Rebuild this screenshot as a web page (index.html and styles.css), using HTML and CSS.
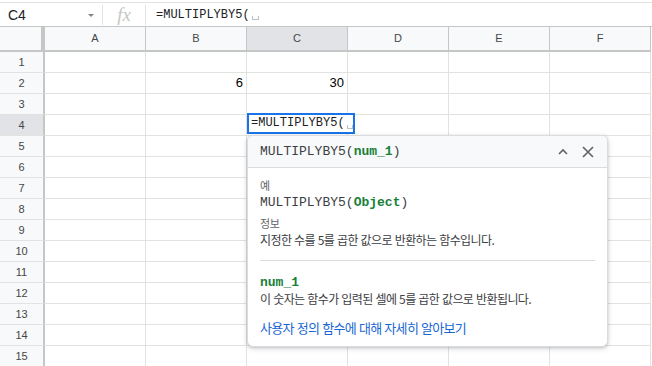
FILE: index.html
```html
<!DOCTYPE html>
<html lang="ko">
<head>
<meta charset="utf-8">
<link rel="stylesheet" href="styles.css">
</head>
<body>
<div class="app">
  <div class="formula-bar">
    <div class="name-box"><span class="name">C4</span><span class="caret"></span></div>
    <div class="sep"></div>
    <div class="fx">fx</div>
    <div class="sep"></div>
    <div class="formula">=MULTIPLYBY5(<span class="ph"></span></div>
  </div>
  <div class="grid">
    <div class="corner"></div>
    <div class="ch">A</div><div class="ch">B</div><div class="ch sel">C</div><div class="ch">D</div><div class="ch">E</div><div class="ch">F</div>

    <div class="rh">1</div><div class="c"></div><div class="c"></div><div class="c"></div><div class="c"></div><div class="c"></div><div class="c"></div>
    <div class="rh">2</div><div class="c"></div><div class="c num">6</div><div class="c num">30</div><div class="c"></div><div class="c"></div><div class="c"></div>
    <div class="rh">3</div><div class="c"></div><div class="c"></div><div class="c"></div><div class="c"></div><div class="c"></div><div class="c"></div>
    <div class="rh sel">4</div><div class="c"></div><div class="c"></div><div class="c"></div><div class="c"></div><div class="c"></div><div class="c"></div>
    <div class="rh">5</div><div class="c"></div><div class="c"></div><div class="c"></div><div class="c"></div><div class="c"></div><div class="c"></div>
    <div class="rh">6</div><div class="c"></div><div class="c"></div><div class="c"></div><div class="c"></div><div class="c"></div><div class="c"></div>
    <div class="rh">7</div><div class="c"></div><div class="c"></div><div class="c"></div><div class="c"></div><div class="c"></div><div class="c"></div>
    <div class="rh">8</div><div class="c"></div><div class="c"></div><div class="c"></div><div class="c"></div><div class="c"></div><div class="c"></div>
    <div class="rh">9</div><div class="c"></div><div class="c"></div><div class="c"></div><div class="c"></div><div class="c"></div><div class="c"></div>
    <div class="rh">10</div><div class="c"></div><div class="c"></div><div class="c"></div><div class="c"></div><div class="c"></div><div class="c"></div>
    <div class="rh">11</div><div class="c"></div><div class="c"></div><div class="c"></div><div class="c"></div><div class="c"></div><div class="c"></div>
    <div class="rh">12</div><div class="c"></div><div class="c"></div><div class="c"></div><div class="c"></div><div class="c"></div><div class="c"></div>
    <div class="rh">13</div><div class="c"></div><div class="c"></div><div class="c"></div><div class="c"></div><div class="c"></div><div class="c"></div>
    <div class="rh">14</div><div class="c"></div><div class="c"></div><div class="c"></div><div class="c"></div><div class="c"></div><div class="c"></div>
    <div class="rh">15</div><div class="c"></div><div class="c"></div><div class="c"></div><div class="c"></div><div class="c"></div><div class="c"></div>
  </div>

  <div class="editor">=MULTIPLYBY5(<span class="ph"></span></div>

  <div class="popup">
    <div class="pop-head">
      <div class="sig">MULTIPLYBY5(<b class="arg">num_1</b>)</div>
      <svg class="ico chev" width="12" height="12" viewBox="0 0 12 12"><path d="M2 8 L6 4 L10 8" fill="none" stroke="#5f6368" stroke-width="1.6"/></svg>
      <svg class="ico close" width="14" height="14" viewBox="0 0 14 14"><path d="M2 2 L12 12 M12 2 L2 12" fill="none" stroke="#5f6368" stroke-width="1.6"/></svg>
    </div>
    <div class="pop-body">
      <div class="label">예</div>
      <div class="sig ex">MULTIPLYBY5(<b class="arg">Object</b>)</div>
      <div class="label info">정보</div>
      <div class="desc">지정한 수를 5를 곱한 값으로 반환하는 함수입니다.</div>
      <div class="divider"></div>
      <div class="argname">num_1</div>
      <div class="desc argdesc">이 숫자는 함수가 입력된 셀에 5를 곱한 값으로 반환됩니다.</div>
      <a class="link" href="#">사용자 정의 함수에 대해 자세히 알아보기</a>
    </div>
  </div>
</div>
</body>
</html>
```
FILE: styles.css
```css
html, body {
  margin: 0;
  padding: 0;
  background: #fff;
  overflow: hidden;
}
.app {
  position: relative;
  width: 652px;
  height: 366px;
  font-family: "Liberation Sans", Arial, sans-serif;
  overflow: hidden;
}
.formula-bar {
  margin-top: 2px;
  height: 23px;
  border-top: 1px solid #e1e3e1;
  display: flex;
  align-items: center;
  box-sizing: content-box;
}
.name-box {
  width: 102px;
  display: flex;
  align-items: center;
  box-sizing: border-box;
  padding-left: 8px;
  padding-right: 8px;
}
.name {
  font-size: 14px;
  color: #202124;
  flex: 1;
}
.caret {
  width: 0;
  height: 0;
  border-left: 3px solid transparent;
  border-right: 3px solid transparent;
  border-top: 3px solid #80868b;
  margin-top: 2px;
}
.sep {
  width: 1px;
  height: 20px;
  background: #e1e3e1;
}
.fx {
  width: 42px;
  text-align: center;
  font-family: "Liberation Serif", serif;
  font-style: italic;
  font-size: 19px;
  color: #c4c7c5;
  line-height: 20px;
}
.formula {
  padding-left: 10px;
  font-family: "Liberation Mono", monospace;
  font-size: 12px;
  color: #202124;
  display: flex;
  align-items: center;
}
.ph {
  display: inline-block;
  width: 5px;
  height: 3px;
  border: 1px solid #bdc1c6;
  border-top: none;
  margin-left: 2px;
  margin-top: 7px;
}
.grid {
  display: grid;
  grid-template-columns: 45px repeat(6, 101px);
  grid-template-rows: 25px repeat(15, 21px);
  border-top: 1px solid #c4c7c5;
}
.grid > div {
  box-sizing: border-box;
}
.corner {
  background: #f8f9fa;
  border-right: 4px solid #c4c7c5;
  border-bottom: 2px solid #c4c7c5;
}
.ch {
  background: #f8f9fa;
  border-right: 1px solid #c4c7c5;
  border-bottom: 2px solid #c4c7c5;
  text-align: center;
  font-size: 11px;
  line-height: 23px;
  color: #444746;
}
.ch.sel, .rh.sel {
  background: #e1e3e6;
}
.rh {
  background: #f8f9fa;
  border-right: 2px solid #c4c7c5;
  border-bottom: 1px solid #e1e3e1;
  text-align: center;
  font-size: 11px;
  line-height: 20px;
  color: #444746;
}
.c {
  border-right: 1px solid #e1e3e1;
  border-bottom: 1px solid #e1e3e1;
  font-size: 13px;
  line-height: 20px;
  color: #000;
}
.c.num {
  text-align: right;
  padding-right: 3px;
}
.editor {
  position: absolute;
  left: 247px;
  top: 113px;
  width: 108px;
  height: 21px;
  box-sizing: border-box;
  border: 2px solid #1a73e8;
  background: #fff;
  padding-left: 2px;
  font-family: "Liberation Mono", monospace;
  font-size: 12px;
  line-height: 17px;
  color: #202124;
  display: flex;
  align-items: center;
}
.popup {
  position: absolute;
  left: 247px;
  top: 135px;
  width: 361px;
  height: 212px;
  box-sizing: border-box;
  background: #fff;
  border: 1px solid #dadce0;
  border-radius: 6px;
  box-shadow: 0 1px 3px rgba(60, 64, 67, 0.25), 0 2px 6px rgba(60, 64, 67, 0.12);
  overflow: hidden;
}
.pop-head {
  height: 32px;
  box-sizing: border-box;
  background: #f8f9fa;
  border-bottom: 1px solid #dadce0;
  display: flex;
  align-items: center;
  padding-left: 12px;
  padding-right: 12px;
}
.pop-head .sig {
  flex: 1;
}
.sig {
  font-family: "Liberation Mono", monospace;
  font-size: 13px;
  color: #3c4043;
}
.arg {
  color: #188038;
  font-weight: bold;
}
.ico {
  display: block;
}
.chev {
  margin-right: 12px;
}
.pop-body {
  padding: 9px 12px 0 12px;
}
.label {
  font-family: "Noto Sans CJK KR", sans-serif;
  font-size: 11px;
  line-height: 16px;
  color: #5f6368;
  letter-spacing: -0.3px;
}
.ex {
  line-height: 20px;
}
.info {
  margin-top: 2px;
}
.desc {
  font-family: "Noto Sans CJK KR", sans-serif;
  font-size: 12px;
  line-height: 18px;
  color: #3c4043;
  letter-spacing: -0.6px;
}
.divider {
  height: 1px;
  background: #dadce0;
  margin: 11px 0 14px 0;
}
.argname {
  font-family: "Liberation Mono", monospace;
  font-weight: bold;
  font-size: 13px;
  line-height: 16px;
  color: #188038;
}
.argdesc {
  line-height: 16px;
}
.link {
  display: block;
  margin-top: 12px;
  font-family: "Noto Sans CJK KR", sans-serif;
  font-size: 13px;
  line-height: 18px;
  color: #1967d2;
  text-decoration: none;
  letter-spacing: -0.7px;
}
```
